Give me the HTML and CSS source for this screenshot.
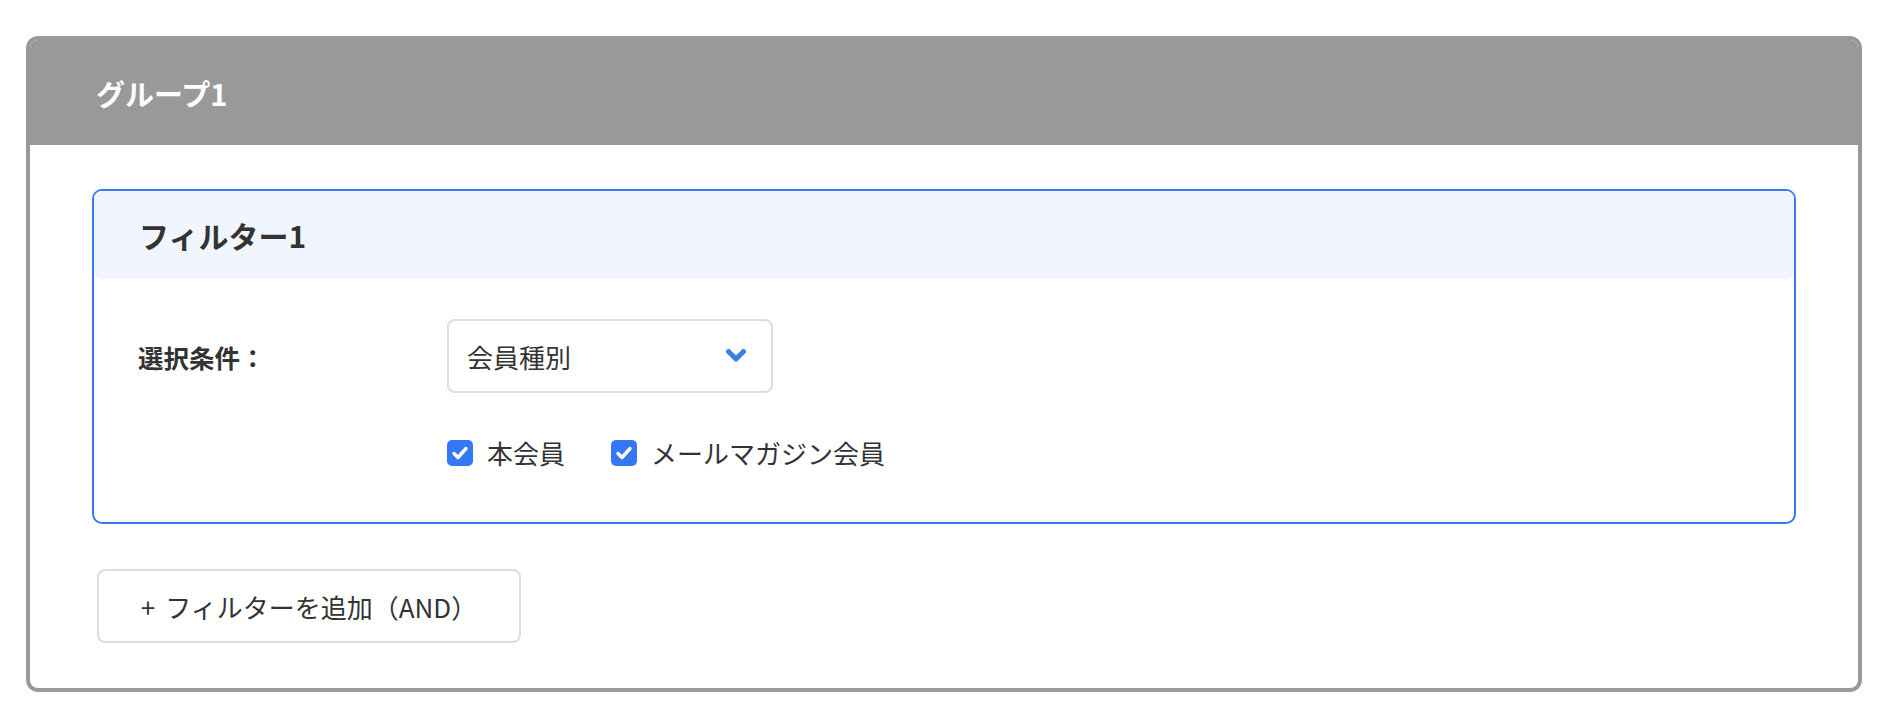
FILE: index.html
```html
<!DOCTYPE html>
<html lang="ja">
<head>
<meta charset="utf-8">
<link rel="stylesheet" href="styles.css">
</head>
<body>
<div class="group">
  <div class="group-header">グループ1</div>
  <div class="group-body">
    <div class="filter">
      <div class="filter-header">フィルター1</div>
      <div class="filter-body">
        <div class="row">
          <div class="label">選択条件：</div>
          <div class="select">
            <span class="select-text">会員種別</span>
            <svg class="chevron" width="22" height="16" viewBox="0 0 22 16"><polyline points="3.5,3.5 11,11 18.5,3.5" fill="none" stroke="#3e7de9" stroke-width="5" stroke-linecap="round" stroke-linejoin="round"/></svg>
          </div>
        </div>
        <div class="checks">
          <label class="check"><span class="box"><svg width="26" height="26" viewBox="0 0 26 26"><polyline points="7,13.5 11,17.5 19,8.5" fill="none" stroke="#fff" stroke-width="3.4" stroke-linecap="round" stroke-linejoin="round"/></svg></span><span class="check-text">本会員</span></label>
          <label class="check"><span class="box"><svg width="26" height="26" viewBox="0 0 26 26"><polyline points="7,13.5 11,17.5 19,8.5" fill="none" stroke="#fff" stroke-width="3.4" stroke-linecap="round" stroke-linejoin="round"/></svg></span><span class="check-text">メールマガジン会員</span></label>
        </div>
      </div>
    </div>
    <button class="add-btn"><span class="plus">+</span>フィルターを追加（AND）</button>
  </div>
</div>
</body>
</html>
```

FILE: styles.css
```css
html, body {
  margin: 0;
  padding: 0;
  background: #fff;
}
body {
  font-family: "Noto Sans CJK JP", "Noto Sans", sans-serif;
  color: #333;
  padding: 36px 28px 0 26px;
}
.group {
  border: 4px solid #999;
  border-radius: 12px;
  height: 648px;
  box-sizing: content-box;
  overflow: hidden;
}
.group-header {
  background: #999;
  height: 105px;
  display: flex;
  align-items: center;
  padding-left: 70px;
  color: #fff;
  font-weight: 700;
  font-size: 29px;
  margin: -4px -4px 0;
  padding-top: 4px;
  padding-right: 4px;
  box-sizing: content-box;
  border-radius: 10px 10px 0 0;
}
.group-body {
  padding: 44px 62px 45px 62px;
}
.filter {
  border: 2px solid #3478f6;
  border-radius: 10px;
  height: 331px;
}
.filter-header {
  background: #f1f6fe;
  height: 88px;
  border-radius: 8px;
  display: flex;
  align-items: center;
  padding-left: 45px;
  font-size: 30px;
  font-weight: 700;
  color: #333;
}
.filter-body {
  padding: 40px 0 0 44px;
}
.row {
  display: flex;
  align-items: center;
}
.label {
  width: 309px;
  font-size: 25.5px;
  font-weight: 700;
  color: #333;
}
.select {
  width: 326px;
  height: 74px;
  box-sizing: border-box;
  border: 2px solid #dcdcdc;
  border-radius: 8px;
  display: flex;
  align-items: center;
  justify-content: space-between;
  padding: 0 24px 0 18px;
}
.select-text {
  font-size: 26px;
  color: #333;
}
.chevron {
  display: block;
}
.checks {
  display: flex;
  align-items: center;
  gap: 46px;
  margin-top: 41px;
  padding-left: 309px;
}
.check {
  display: flex;
  align-items: center;
  gap: 14px;
  font-size: 26px;
  color: #333;
}
.box {
  width: 26px;
  height: 26px;
  border-radius: 5px;
  background: #3478f6;
  display: flex;
}
.box svg {
  display: block;
}
.add-btn {
  margin: 45px 0 0 5px;
  width: 424px;
  height: 74px;
  background: #fff;
  border: 2px solid #dcdcdc;
  border-radius: 8px;
  font-family: "Noto Sans CJK JP", "Noto Sans", sans-serif;
  font-size: 26px;
  color: #333;
  display: flex;
  align-items: center;
  justify-content: center;
  padding: 0;
}
.plus {
  margin-right: 10px;
}
```
